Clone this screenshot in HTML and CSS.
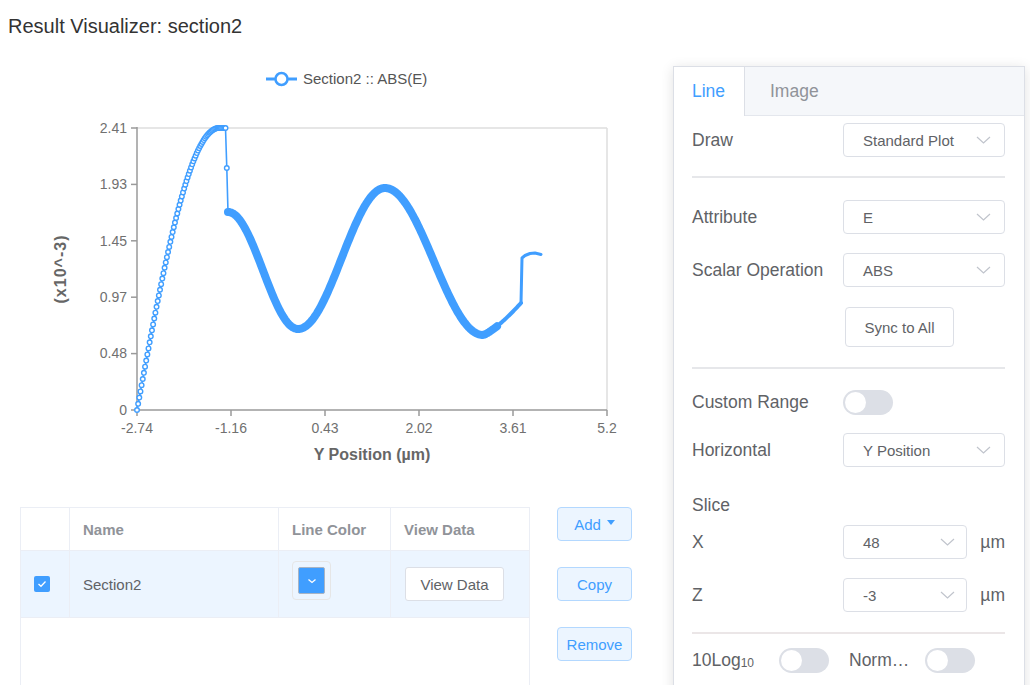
FILE: index.html
```html
<!DOCTYPE html>
<html lang="en">
<head>
<meta charset="utf-8">
<title>Result Visualizer</title>
<link rel="stylesheet" href="styles.css">
</head>
<body>
<h1 class="title">Result Visualizer: section2</h1>
<div class="main">
  <div class="left">
    <svg class="chart" viewBox="0 38 660 457" width="660" height="457" xmlns="http://www.w3.org/2000/svg">
      <g class="legend">
        <line x1="266" y1="79" x2="297" y2="79" stroke="#409eff" stroke-width="3"/>
        <circle cx="281.5" cy="79" r="6" fill="#fff" stroke="#409eff" stroke-width="2.5"/>
        <text x="303" y="84" class="legend-text">Section2 :: ABS(E)</text>
      </g>
      <g class="grid">
        <line x1="137" y1="128" x2="607" y2="128" stroke="#dedede" stroke-width="1.5"/>
        <line x1="607" y1="128" x2="607" y2="410" stroke="#dedede" stroke-width="1.5"/>
        <line x1="137" y1="127" x2="137" y2="411" stroke="#9a9a9a" stroke-width="1.5"/>
        <line x1="136" y1="410" x2="607" y2="410" stroke="#9a9a9a" stroke-width="1.5"/>
        <g stroke="#9a9a9a" stroke-width="1.5">
          <line x1="131" y1="128" x2="137" y2="128"/>
          <line x1="131" y1="184.4" x2="137" y2="184.4"/>
          <line x1="131" y1="240.8" x2="137" y2="240.8"/>
          <line x1="131" y1="297.2" x2="137" y2="297.2"/>
          <line x1="131" y1="353.6" x2="137" y2="353.6"/>
          <line x1="131" y1="410" x2="137" y2="410"/>
          <line x1="137" y1="410" x2="137" y2="416"/>
          <line x1="231" y1="410" x2="231" y2="416"/>
          <line x1="325" y1="410" x2="325" y2="416"/>
          <line x1="419" y1="410" x2="419" y2="416"/>
          <line x1="513" y1="410" x2="513" y2="416"/>
          <line x1="607" y1="410" x2="607" y2="416"/>
        </g>
      </g>
      <g class="ytick" text-anchor="end">
        <text x="127" y="133">2.41</text>
        <text x="127" y="189">1.93</text>
        <text x="127" y="246">1.45</text>
        <text x="127" y="302">0.97</text>
        <text x="127" y="358">0.48</text>
        <text x="127" y="415">0</text>
      </g>
      <g class="xtick" text-anchor="middle">
        <text x="137" y="433">-2.74</text>
        <text x="231" y="433">-1.16</text>
        <text x="325" y="433">0.43</text>
        <text x="419" y="433">2.02</text>
        <text x="513" y="433">3.61</text>
        <text x="607" y="433">5.2</text>
      </g>
      <text x="372" y="460" text-anchor="middle" class="axis-title">Y Position (µm)</text>
      <text x="0" y="0" text-anchor="middle" class="axis-title ytitle" transform="translate(66 269) rotate(-90)">(x10^-3)</text>
      <g id="series"></g>
    </svg>

    <div class="data-row">
      <div class="table">
        <div class="thead">
          <div class="cell"></div>
          <div class="cell">Name</div>
          <div class="cell">Line Color</div>
          <div class="cell last">View Data</div>
        </div>
        <div class="trow">
          <div class="cell">
            <span class="checkbox">
              <svg width="10" height="8" viewBox="0 0 10 8"><polyline points="1.5,4 4,6.3 8.5,1.5" fill="none" stroke="#fff" stroke-width="1.3"/></svg>
            </span>
          </div>
          <div class="cell name">Section2</div>
          <div class="cell">
            <span class="picker"><span class="picker-color">
              <svg width="10" height="6" viewBox="0 0 10 6"><polyline points="1.5,1.5 5,4.5 8.5,1.5" fill="none" stroke="#fff" stroke-width="1.3"/></svg>
            </span></span>
          </div>
          <div class="cell last"><button class="btn-plain">View Data</button></div>
        </div>
      </div>
      <div class="btns">
        <button class="btn-light">Add<span class="caret"></span></button>
        <button class="btn-light">Copy</button>
        <button class="btn-light">Remove</button>
      </div>
    </div>
  </div>

  <div class="panel">
    <div class="tabs">
      <div class="tab active">Line</div>
      <div class="tab inactive">Image</div>
    </div>
    <div class="panel-body">
      <div class="row">
        <div class="label">Draw</div>
        <div class="select"><span>Standard Plot</span><svg class="chev" width="15" height="8" viewBox="0 0 15 8"><polyline points="1,1 7.5,7 14,1" fill="none" stroke="#c0c4cc" stroke-width="1.2"/></svg></div>
      </div>
      <div class="divider d1"></div>
      <div class="row">
        <div class="label">Attribute</div>
        <div class="select"><span>E</span><svg class="chev" width="15" height="8" viewBox="0 0 15 8"><polyline points="1,1 7.5,7 14,1" fill="none" stroke="#c0c4cc" stroke-width="1.2"/></svg></div>
      </div>
      <div class="row mt19">
        <div class="label">Scalar Operation</div>
        <div class="select"><span>ABS</span><svg class="chev" width="15" height="8" viewBox="0 0 15 8"><polyline points="1,1 7.5,7 14,1" fill="none" stroke="#c0c4cc" stroke-width="1.2"/></svg></div>
      </div>
      <button class="btn-sync">Sync to All</button>
      <div class="divider d2"></div>
      <div class="row switch-row">
        <div class="label">Custom Range</div>
        <span class="toggle"><span class="knob"></span></span>
      </div>
      <div class="row mt18">
        <div class="label">Horizontal</div>
        <div class="select"><span>Y Position</span><svg class="chev" width="15" height="8" viewBox="0 0 15 8"><polyline points="1,1 7.5,7 14,1" fill="none" stroke="#c0c4cc" stroke-width="1.2"/></svg></div>
      </div>
      <div class="slice">Slice</div>
      <div class="row mt10">
        <div class="label">X</div>
        <div class="select small"><span>48</span><svg class="chev" width="15" height="8" viewBox="0 0 15 8"><polyline points="1,1 7.5,7 14,1" fill="none" stroke="#c0c4cc" stroke-width="1.2"/></svg></div>
        <span class="unit">µm</span>
      </div>
      <div class="row mt19">
        <div class="label">Z</div>
        <div class="select small"><span>-3</span><svg class="chev" width="15" height="8" viewBox="0 0 15 8"><polyline points="1,1 7.5,7 14,1" fill="none" stroke="#c0c4cc" stroke-width="1.2"/></svg></div>
        <span class="unit">µm</span>
      </div>
      <div class="divider d3"></div>
      <div class="row bottom-row">
        <div class="blabel">10Log<sub>10</sub></div>
        <span class="toggle"><span class="knob"></span></span>
        <div class="blabel norm">Norm…</div>
        <span class="toggle"><span class="knob"></span></span>
      </div>
    </div>
  </div>
</div>
<script src="script.js"></script>
</body>
</html>
```

FILE: styles.css
```css
html, body {
  margin: 0;
  padding: 0;
  background: #fff;
}
body {
  font-family: "Liberation Sans", Arial, sans-serif;
  color: #606266;
  overflow: hidden;
  width: 1030px;
  height: 685px;
}
.title {
  margin: 15px 0 0 8px;
  font-size: 20px;
  line-height: 23px;
  font-weight: normal;
  color: #333;
}
.main {
  display: flex;
  align-items: flex-start;
}
.left {
  width: 660px;
  flex: none;
}
.chart {
  display: block;
  width: 660px;
  height: 457px;
  font-family: "Liberation Sans", Arial, sans-serif;
}
.legend-text {
  font-size: 15px;
  fill: #555;
}
.ytick text, .xtick text {
  font-size: 14px;
  fill: #707070;
}
.axis-title {
  font-size: 16px;
  font-weight: bold;
  fill: #666;
}
.ytitle {
  letter-spacing: 1px;
}

/* table */
.data-row {
  display: flex;
  margin-top: 12px;
  padding-left: 20px;
  gap: 27px;
}
.table {
  width: 510px;
  height: 200px;
  box-sizing: border-box;
  border: 1px solid #ebeef5;
  border-bottom: none;
}
.thead, .trow {
  display: grid;
  grid-template-columns: 49px 209px 112px 1fr;
  box-sizing: border-box;
  border-bottom: 1px solid #ebeef5;
}
.thead {
  height: 43px;
}
.trow {
  height: 67px;
  background: #ecf5ff;
}
.cell {
  display: flex;
  align-items: center;
  padding-left: 13px;
  border-right: 1px solid #ebeef5;
  font-size: 15px;
}
.cell.last {
  border-right: none;
}
.thead .cell {
  font-weight: bold;
  color: #909399;
}
.trow .cell {
  color: #606266;
}
.checkbox {
  width: 16px;
  height: 16px;
  background: #409eff;
  border-radius: 2px;
  display: flex;
  align-items: center;
  justify-content: center;
}
.picker {
  width: 39px;
  height: 39px;
  box-sizing: border-box;
  border: 1px solid #e6e6e6;
  border-radius: 4px;
  padding: 5px;
  margin-top: -7px;
}
.picker-color {
  display: flex;
  align-items: center;
  justify-content: center;
  width: 27px;
  height: 27px;
  box-sizing: border-box;
  background: #409eff;
  border: 1px solid #a8b4c4;
  border-radius: 2px;
}
.btn-plain {
  width: 99px;
  height: 34px;
  background: #fff;
  border: 1px solid #dcdfe6;
  border-radius: 3px;
  font-family: inherit;
  font-size: 15px;
  color: #606266;
  padding: 0;
  margin-left: 1px;
}
.btns {
  display: flex;
  flex-direction: column;
  gap: 26px;
}
.btn-light {
  width: 75px;
  height: 34px;
  background: #ecf5ff;
  border: 1px solid #b3d8ff;
  border-radius: 4px;
  color: #409eff;
  font-family: inherit;
  font-size: 15px;
  padding: 0;
  display: flex;
  align-items: center;
  justify-content: center;
}
.caret {
  display: inline-block;
  width: 0;
  height: 0;
  border-left: 4.5px solid transparent;
  border-right: 4.5px solid transparent;
  border-top: 5px solid #409eff;
  margin-left: 6px;
  margin-top: -4px;
}

/* right panel */
.panel {
  width: 352px;
  height: 650px;
  margin-left: 13px;
  margin-top: 28px;
  box-sizing: border-box;
  border: 1px solid #dcdfe6;
  box-shadow: 0 2px 12px rgba(0, 0, 0, 0.12);
  background: #fff;
  flex: none;
}
.tabs {
  display: flex;
  height: 49px;
  box-sizing: border-box;
  background: #f5f7fa;
  border-bottom: 1px solid #e4e7ed;
}
.tab {
  display: flex;
  align-items: center;
  font-size: 17.5px;
  height: 49px;
  box-sizing: border-box;
}
.tab.active {
  padding: 0 18px;
  background: #fff;
  color: #409eff;
  border-right: 1px solid #dcdfe6;
  width: 71px;
}
.tab.inactive {
  padding-left: 25px;
  color: #909399;
  height: 48px;
}
.panel-body {
  padding: 7px 19px 0 18px;
}
.row {
  display: flex;
  align-items: center;
}
.label {
  width: 151px;
  flex: none;
  font-size: 17.5px;
  color: #606266;
}
.select {
  width: 162px;
  height: 34px;
  box-sizing: border-box;
  border: 1px solid #dcdfe6;
  border-radius: 4px;
  display: flex;
  align-items: center;
  justify-content: space-between;
  padding: 0 13px 0 19px;
  font-size: 15px;
  color: #606266;
}
.select.small {
  width: 125px;
  padding-right: 11px;
}
.unit {
  margin-left: 13px;
  font-size: 17.5px;
  color: #606266;
}
.divider {
  height: 2px;
  background: #e6e7ea;
}
.d1 {
  margin: 19px 0 22px;
}
.d2 {
  margin: 20px 0 0;
}
.d3 {
  margin: 20px 0 0;
  background: #ebe6e7;
}
.mt19 { margin-top: 19px; }
.mt18 { margin-top: 18px; }
.mt10 { margin-top: 10px; }
.btn-sync {
  display: block;
  width: 109px;
  height: 40px;
  margin: 20px 0 0 153px;
  background: #fff;
  border: 1px solid #dcdfe6;
  border-radius: 4px;
  font-family: inherit;
  font-size: 15px;
  color: #606266;
  padding: 0;
}
.switch-row {
  margin-top: 21px;
  height: 25px;
}
.toggle {
  position: relative;
  display: inline-block;
  width: 50px;
  height: 25px;
  border-radius: 13px;
  background: #dcdfe6;
  flex: none;
}
.knob {
  position: absolute;
  left: 2px;
  top: 2px;
  width: 21px;
  height: 21px;
  border-radius: 50%;
  background: #fff;
}
.slice {
  margin-top: 28px;
  height: 20px;
  line-height: 20px;
  font-size: 17.5px;
  color: #606266;
}
.bottom-row {
  margin-top: 14px;
  height: 25px;
}
.blabel {
  width: 87px;
  font-size: 17.5px;
  color: #606266;
}
.blabel sub {
  font-size: 12px;
  vertical-align: baseline;
  position: relative;
  top: 1px;
}
.blabel.norm {
  width: 76px;
  margin-left: 20px;
}
```

FILE: script.js
```js
(function () {
  var NS = 'http://www.w3.org/2000/svg';
  var g = document.getElementById('series');
  function el(name, attrs) {
    var e = document.createElementNS(NS, name);
    for (var k in attrs) e.setAttribute(k, attrs[k]);
    g.appendChild(e);
    return e;
  }
  function ease(y0, y1, t) {
    return y0 + (y1 - y0) * (1 - Math.cos(Math.PI * t)) / 2;
  }
  function pstr(arr) {
    return arr.map(function (p) { return p[0].toFixed(2) + ',' + p[1].toFixed(2); }).join(' ');
  }
  var C = '#409eff';

  // thick wave section
  var th = [];
  var segs = [[228, 212, 298, 329], [298, 329, 385, 188], [385, 188, 483, 335]];
  segs.forEach(function (s) {
    for (var x = s[0]; x < s[2]; x += 1) {
      th.push([x, ease(s[1], s[3], (x - s[0]) / (s[2] - s[0]))]);
    }
  });
  var tail = [];
  for (var x2 = 483; x2 <= 521; x2 += 1) {
    var t = (x2 - 483) / 38;
    tail.push([x2, 335 - 32 * Math.pow(t, 1.3)]);
  }
  var thickPart = th.concat(tail.filter(function (p) { return p[0] <= 497; }));
  var thinPart = tail.filter(function (p) { return p[0] >= 494; });
  el('polyline', { points: pstr(thickPart), fill: 'none', stroke: C, 'stroke-width': 8, 'stroke-linejoin': 'round', 'stroke-linecap': 'round' });
  el('polyline', { points: pstr(thinPart), fill: 'none', stroke: C, 'stroke-width': 4, 'stroke-linejoin': 'round', 'stroke-linecap': 'round' });
  el('polyline', { points: '521,303 522,258 525,255.5 530,253.5 535,253 541,254.5', fill: 'none', stroke: C, 'stroke-width': 3, 'stroke-linejoin': 'round', 'stroke-linecap': 'round' });

  // rising sparse section with hollow markers
  var pts = [];
  for (var x = 137; x <= 224.6; x += 1.15) {
    var tt = Math.min((x - 137) / 82, 1);
    pts.push([x, 410 - 282 * Math.sin(tt * Math.PI / 2)]);
  }
  pts.push([225.5, 128]);
  pts.push([226.8, 168]);
  pts.push([228, 212]);
  el('polyline', { points: pstr(pts), fill: 'none', stroke: C, 'stroke-width': 1.6 });
  pts.forEach(function (p, i) {
    if (i === pts.length - 1) return;
    el('circle', { cx: p[0], cy: p[1], r: 2.3, fill: '#fff', stroke: C, 'stroke-width': 1.4 });
  });
})();
```
